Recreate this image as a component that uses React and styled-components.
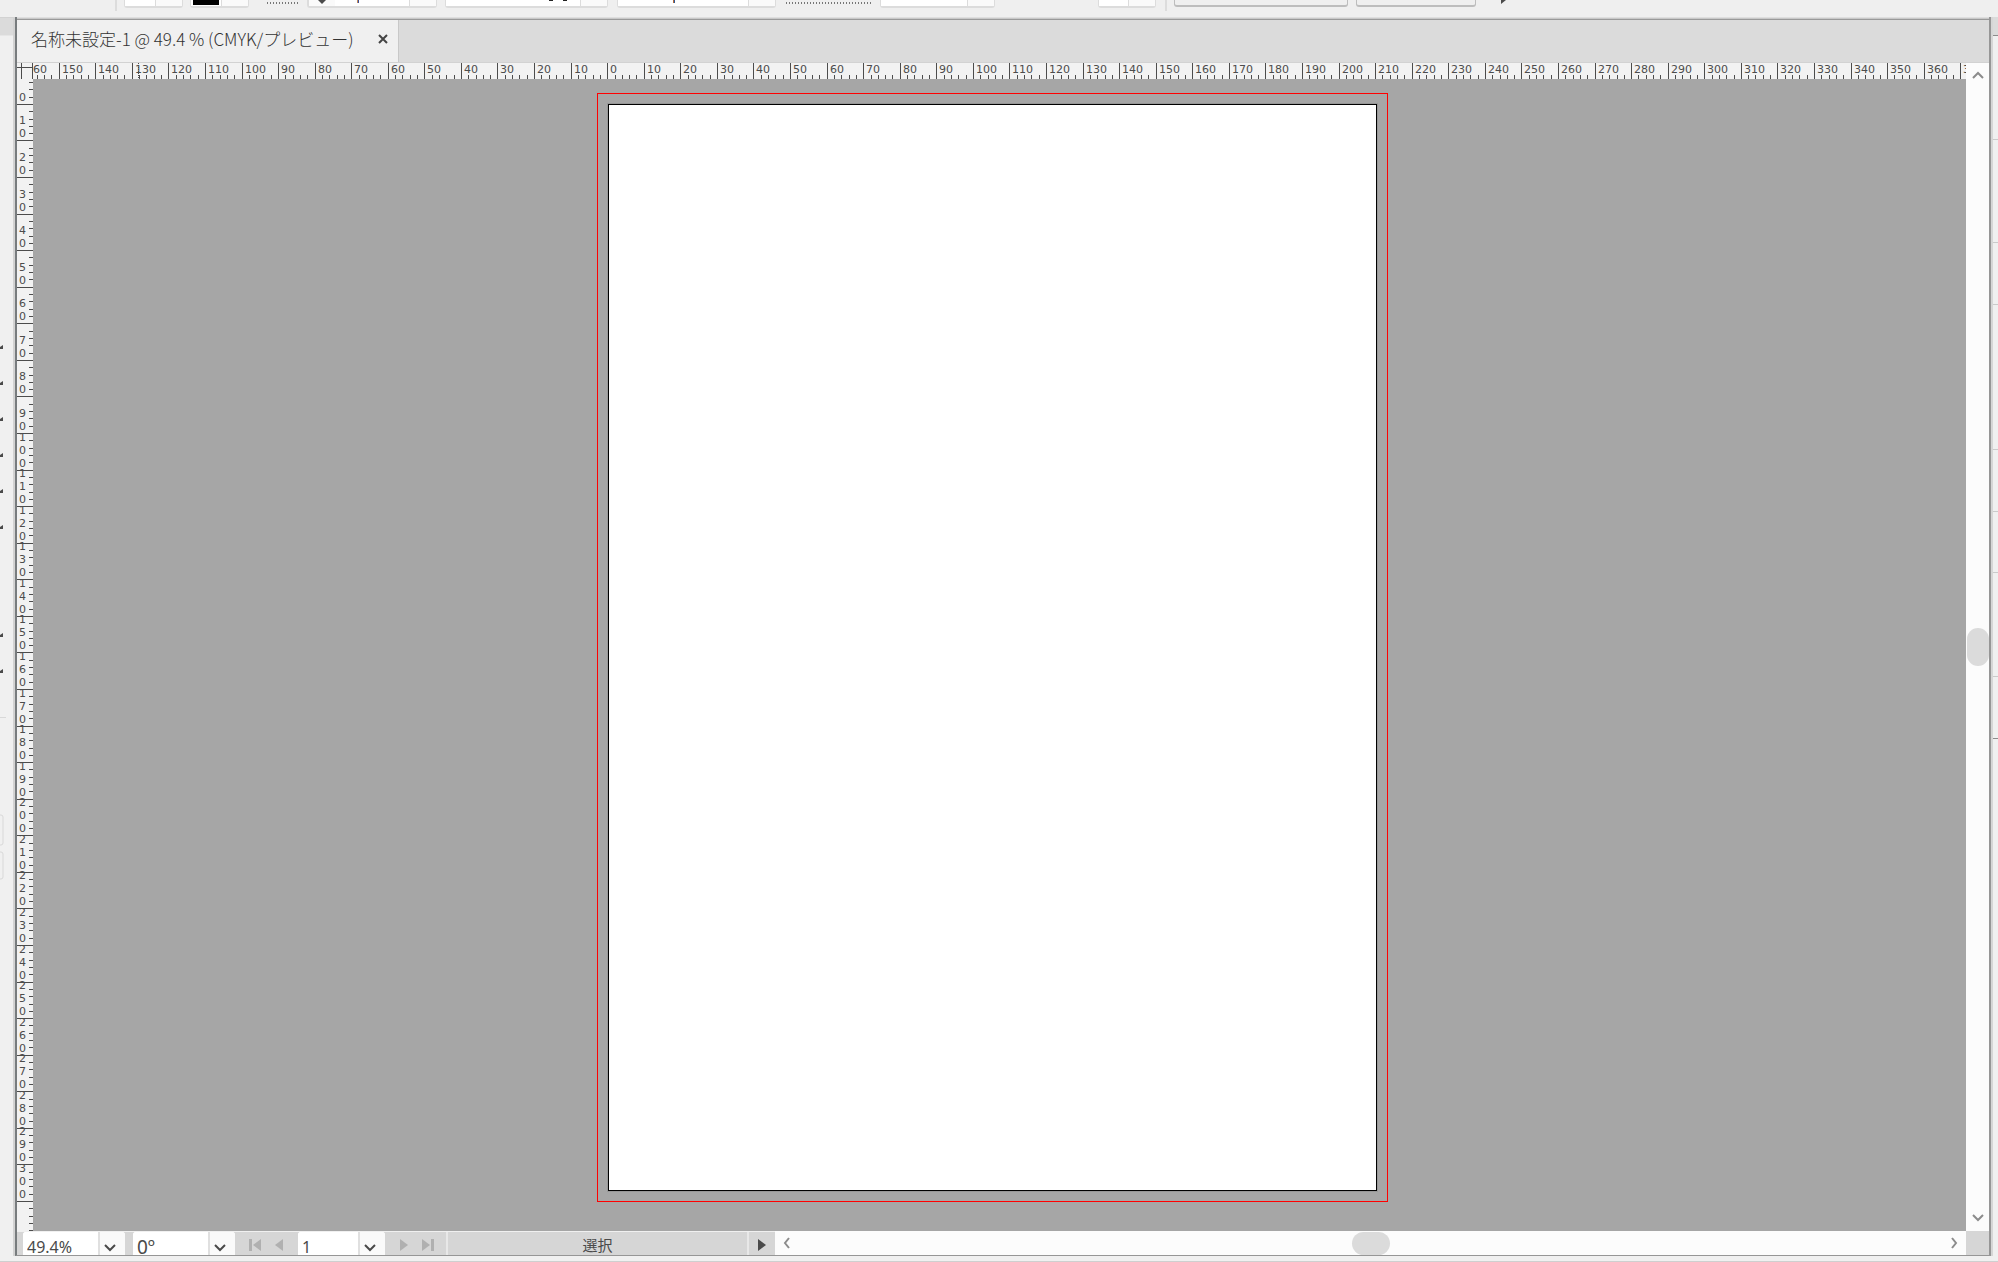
import React, { useState } from 'react'
import styled, { createGlobalStyle } from 'styled-components'

const GlobalStyle = createGlobalStyle`
  * {
    box-sizing: border-box;
  }
  html, body, #root {
    height: 100%;
    margin: 0;
  }
  body {
    background: #f0f0f0;
    color: #4a4a4a;
    font-family: "Noto Sans", "Noto Sans CJK JP", sans-serif;
    overflow: hidden;
  }
  svg {
    display: block;
  }
  button, input {
    font: inherit;
    color: inherit;
    border: 0;
    padding: 0;
    margin: 0;
    border-radius: 0;
  }
`

const Page = styled.div`
  display: flex;
  flex-direction: column;
  height: 100%;
`

const ControlBar = styled.header`
  display: flex;
  align-items: flex-start;
  height: 17px;
  padding-left: 115px;
  background: #efefef;
  overflow: hidden;
`

const BarDivider = styled.div`
  width: 2px;
  height: 11px;
  background: #dcdcdc;
  margin-right: ${props => props.$gap || 0}px;
`

const BarField = styled.div`
  display: flex;
  height: 8px;
  width: ${props => props.$width}px;
  margin-right: ${props => props.$gap}px;
  border: 1px solid #dcdcdc;
  border-width: 0 1px 2px 1px;
  border-radius: 0 0 3px 3px;
  background: #fff;
`

const BarValue = styled.div`
  flex: 1;
  display: flex;
  justify-content: ${props => props.$align || 'flex-end'};
  background: #fff;
`

const BarDrop = styled.div`
  width: 27px;
  border-left: 1px solid #dcdcdc;
  background: #fafafa;
`

const Swatch = styled.div`
  width: 26px;
  height: 5px;
  background: #000;
  margin-right: 2px;
`

const BarDots = styled.div`
  width: ${props => props.$width}px;
  height: 4px;
  margin-right: ${props => props.$gap}px;
  background: repeating-linear-gradient(to right, #777 0 1px, transparent 1px 3px) bottom / 100% 2px no-repeat;
`

const BarButton = styled.div`
  width: ${props => props.$width}px;
  height: 7px;
  margin-right: ${props => props.$gap}px;
  border: 2px solid #bdbdbd;
  border-width: 0 1px 2px 1px;
  border-radius: 0 0 3px 3px;
`

const Body = styled.div`
  flex: 1;
  min-height: 0;
  display: flex;
`

const LeftPanel = styled.aside`
  width: 15px;
  background: #f0f0f0;
  border-right: 2px solid #d3d3d3;
  overflow: hidden;
`

const LeftHead = styled.div`
  height: 19px;
  background: #dbdbdb;
  border-top: 1px solid #d2d2d2;
  border-bottom: 1px solid #e6e6e6;
`

const RightPanel = styled.aside`
  width: 7px;
  border-left: 2px solid #d6d6d6;
  background: #f0f0f0;
  display: flex;
  flex-direction: column;
`

const RightHead = styled.div`
  height: 19px;
  background: #dbdbdb;
  border-bottom: 1px solid #8c8c8c;
`

const RightSection = styled.div`
  height: ${props => props.$height}px;
  border-bottom: 1px solid ${props => props.$dark ? '#8c8c8c' : '#cacaca'};
`

const Workspace = styled.main`
  flex: 1;
  min-width: 0;
  display: flex;
  flex-direction: column;
  border-left: 2px solid #787c7e;
  border-right: 2px solid #969696;
  border-bottom: 1px solid #969696;
`

const TabBar = styled.nav`
  display: flex;
  height: 46px;
  background: #dbdbdb;
  border-top: 3px solid #999;
  border-bottom: 1px solid #d2d2d2;
  border-image: linear-gradient(#dedede 0 2%, #c8c8c8 2% 4%, #999 4% 50%, #d2d2d2 50%) 3 0 1 0;
`

const Tab = styled.div`
  display: flex;
  align-items: center;
  width: 382px;
  height: 42px;
  padding: 0 7px 4px 14px;
  background: #f0f0f0;
  border-right: 1px solid #c8c8c8;
`

const TabTitle = styled.span`
  flex: 1;
  color: #333;
  font-family: "Noto Sans CJK JP", sans-serif;
  font-size: 17px;
  line-height: 24px;
  font-weight: 300;
  white-space: nowrap;
`

const TabClose = styled.button`
  display: flex;
  align-items: center;
  justify-content: center;
  width: 16px;
  height: 16px;
  background: transparent;
`

const Editor = styled.section`
  flex: 1;
  min-height: 0;
  display: grid;
  grid-template-columns: 16px minmax(0, 1fr) 23px;
  grid-template-rows: 16px minmax(0, 1fr);
`

const RulerSvg = styled.svg`
  width: 100%;
  height: 100%;
  overflow: hidden;
  background: #f2f2f2;
  font-family: "DejaVu Sans", sans-serif;
  font-size: 11px;
  fill: #4c4c4c;
  shape-rendering: crispEdges;
`

const Canvas = styled.div`
  position: relative;
  background: #a6a6a6;
  overflow: hidden;
`

const Bleed = styled.div`
  position: absolute;
  left: 564px;
  top: 14px;
  width: 791px;
  height: 1109px;
  border: 1px solid #f00;
`

const Artboard = styled.div`
  position: absolute;
  left: 575px;
  top: 25px;
  width: 769px;
  height: 1087px;
  background: #fff;
  border: 1px solid #000;
  box-shadow: 0 0 0 1px #979797;
`

const ScrollColumn = styled.div`
  grid-row: 1 / 3;
  grid-column: 3;
  display: flex;
  flex-direction: column;
  align-items: center;
  padding: 1px 0 2px;
  background: #fcfcfc;
`

const ScrollButton = styled.button`
  display: flex;
  align-items: center;
  justify-content: center;
  width: 24px;
  height: 24px;
  background: transparent;
`

const ScrollTrack = styled.div`
  flex: 1;
  align-self: stretch;
  display: flex;
  flex-direction: ${props => props.$vertical ? 'column' : 'row'};
  align-items: center;
`

const Spacer = styled.div`
  flex: ${props => props.$grow} 0 0;
`

const Thumb = styled.div`
  width: ${props => props.$vertical ? 22 : 38}px;
  height: ${props => props.$vertical ? 38 : 23}px;
  border-radius: 12px;
  background: #dbdbdb;
`

const StatusBar = styled.footer`
  display: flex;
  height: 24px;
  background: #d6d6d6;
`

const StatusTools = styled.div`
  display: flex;
  align-items: stretch;
  width: 758px;
  padding-left: 6px;
  border-top: 1px solid #f0f0f0;
  overflow: hidden;
`

const Combo = styled.div`
  display: flex;
  width: ${props => props.$width}px;
  margin-right: ${props => props.$gap}px;
  border-radius: 3px 3px 0 0;
  overflow: hidden;
  background: #fff;
`

const ComboInput = styled.input`
  flex: 1;
  min-width: 0;
  padding: 6px 0 0 4px;
  background: #fff;
  font-size: ${props => props.$size}px;
  line-height: 16px;
  outline: 0;
`

const ComboButton = styled.button`
  display: flex;
  align-items: center;
  justify-content: center;
  width: 27px;
  padding: 6px 5px 0 0;
  background: #fafafa;
  border-left: 2px solid #e0e0e0;
`

const NavButton = styled.button`
  display: flex;
  align-items: center;
  justify-content: center;
  width: ${props => props.$width}px;
  margin-right: ${props => props.$gap}px;
  padding-top: 2px;
  background: transparent;
`

const StatusLabel = styled.div`
  flex: 1;
  border: 2px solid #e8e8e8;
  border-width: 0 2px;
  padding-top: 2px;
  text-align: center;
  font-family: "Noto Sans CJK JP", sans-serif;
  font-size: 15px;
  line-height: 22px;
`

const ScrollRow = styled.div`
  flex: 1;
  display: flex;
  align-items: center;
  background: #fcfcfc;
`

const Corner = styled.div`
  width: 23px;
  background: #d6d6d6;
`

const BottomEdge = styled.div`
  height: 6px;
  background: #f0f0f0;
  border-bottom: 1px solid #cfcfcf;
`

// ruler scale: pixels per millimetre at 49.4 %
const PX_PER_MM = 3.657

const range = (from, to, step) => {
  const list = []
  for (let value = from; value <= to; value += step) list.push(value)
  return list
}

function HorizontalRuler() {
  const at = mm => Math.floor(574.7 + mm * PX_PER_MM)
  return (
    <RulerSvg role="img" aria-label="水平定規">
      {range(-160, 378, 2).map(mm => (
        <rect key={mm} x={at(mm)} y={mm % 10 === 0 ? 0 : 12} width="1" height={mm % 10 === 0 ? 16 : 4} />
      ))}
      {range(-150, 370, 10).map(mm => (
        <text key={mm} x={at(mm) + 3} y="10">{Math.abs(mm)}</text>
      ))}
      <text x="0" y="10">60</text>
      <line x1="105.5" y1="0" x2="105.5" y2="16" stroke="#4c4c4c" strokeDasharray="1 1" />
    </RulerSvg>
  )
}

function VerticalRuler() {
  const at = mm => Math.floor(25.4 + mm * PX_PER_MM)
  return (
    <RulerSvg role="img" aria-label="垂直定規">
      {range(-6, 308, 2).map(mm => (
        <rect key={mm} x={mm % 10 === 0 ? 0 : 12} y={at(mm)} width={mm % 10 === 0 ? 16 : 4} height="1" />
      ))}
      {range(0, 300, 10).map(mm => {
        const digits = String(mm).split('')
        return digits.map((digit, i) => (
          <text key={mm + '-' + i} x="2" y={at(mm) - 3 - (digits.length - 1 - i) * 13}>{digit}</text>
        ))
      })}
    </RulerSvg>
  )
}

function RulerCorner() {
  return (
    <RulerSvg aria-hidden="true">
      <rect x="0" y="4" width="16" height="1" />
      <rect x="4" y="0" width="1" height="16" />
      <rect x="15" y="0" width="1" height="16" />
    </RulerSvg>
  )
}

const chevrons = {
  up: 'M1 8L6 3L11 8',
  down: 'M1 4L6 9L11 4',
  left: 'M8 1L4 6L8 11',
  right: 'M4 1L8 6L4 11'
}

function Chevron({ direction, color = '#8c8c8c' }) {
  return (
    <svg width="12" height="12" viewBox="0 0 12 12" fill="none" stroke={color} strokeWidth="2">
      <path d={chevrons[direction]} />
    </svg>
  )
}

function PageArrow({ back, bar, color = '#b0b0b0' }) {
  return (
    <svg width="14" height="14" viewBox="0 0 14 14" fill={color}>
      <g transform={back ? 'translate(14 0) scale(-1 1)' : undefined}>
        <path d={bar ? 'M1 1L9 7L1 13Z' : 'M3 1L11 7L3 13Z'} />
        {bar && <rect x="10" y="1" width="3" height="12" />}
      </g>
    </svg>
  )
}

function ControlFields() {
  return (
    <ControlBar>
      <BarDivider $gap={7} />
      <BarField $width={59} $gap={7}><BarValue /><BarDrop /></BarField>
      <BarField $width={59} $gap={18}><BarValue><Swatch /></BarValue><BarDrop /></BarField>
      <BarDots $width={32} $gap={8} />
      <BarField $width={130} $gap={8}>
        <BarDrop>
          <svg width="26" height="4" fill="#4a4a4a"><path d="M9 0H17L13 4Z" /></svg>
        </BarDrop>
        <BarValue $align="center">
          <svg width="30" height="4"><rect x="0" width="1" height="3" fill="#c48a5a" /><rect x="1" width="1" height="3" fill="#3b4f9a" /></svg>
        </BarValue>
        <BarDrop />
      </BarField>
      <BarField $width={163} $gap={9}>
        <BarValue>
          <svg width="33" height="4" fill="#222"><rect x="2" width="4" height="1" /><rect x="16" width="4" height="1" /></svg>
        </BarValue>
        <BarDrop />
      </BarField>
      <BarField $width={159} $gap={10}>
        <BarValue $align="center">
          <svg width="20" height="4"><rect x="0" width="1" height="3" fill="#b5673a" /><rect x="1" width="1" height="3" fill="#2c5b96" /></svg>
        </BarValue>
        <BarDrop />
      </BarField>
      <BarDots $width={85} $gap={9} />
      <BarField $width={115} $gap={103}><BarValue /><BarDrop /></BarField>
      <BarField $width={58} $gap={9}><BarValue /><BarDrop /></BarField>
      <BarDivider $gap={7} />
      <BarButton $width={174} $gap={8} />
      <BarButton $width={120} $gap={25} />
      <svg width="6" height="5" fill="#4a4a4a"><path d="M0 0H5L0 4Z" /></svg>
    </ControlBar>
  )
}

function ToolMarks() {
  return (
    <svg width="13" height="900" aria-hidden="true">
      {[312, 348, 384, 420, 456, 492, 600, 636].map(y => (
        <path key={y} d={`M0 ${y - 1}L3 ${y - 3}V${y + 1}H0Z`} fill="#4a4a4a" />
      ))}
      <rect y="681" width="6" height="1" fill="#d8d8d8" />
      <rect x="-6" y="779" width="9" height="30" rx="2" fill="none" stroke="#d8d8d8" />
      <rect x="-6" y="816" width="9" height="27" rx="2" fill="none" stroke="#d8d8d8" />
    </svg>
  )
}

function ComboField({ label, initial, width, gap, size = 16 }) {
  const [value, setValue] = useState(initial)
  return (
    <Combo $width={width} $gap={gap}>
      <ComboInput type="text" aria-label={label} $size={size} value={value} onChange={event => setValue(event.target.value)} />
      <ComboButton aria-label={label + 'を選択'}><Chevron direction="down" color="#4a4a4a" /></ComboButton>
    </Combo>
  )
}

function App() {
  return (
    <Page>
      <GlobalStyle />
      <ControlFields />
      <Body>
        <LeftPanel>
          <LeftHead />
          <ToolMarks />
        </LeftPanel>
        <Workspace>
          <TabBar>
            <Tab>
              <TabTitle>名称未設定-1 @ 49.4 % (CMYK/プレビュー)</TabTitle>
              <TabClose aria-label="閉じる">
                <svg width="10" height="10" viewBox="0 0 10 10" stroke="#444" strokeWidth="2">
                  <path d="M1 1L9 9M9 1L1 9" />
                </svg>
              </TabClose>
            </Tab>
          </TabBar>
          <Editor>
            <RulerCorner />
            <HorizontalRuler />
            <ScrollColumn>
              <ScrollButton aria-label="上へ"><Chevron direction="up" /></ScrollButton>
              <ScrollTrack $vertical>
                <Spacer $grow={1} />
                <Thumb $vertical />
                <Spacer $grow={1} />
              </ScrollTrack>
              <ScrollButton aria-label="下へ"><Chevron direction="down" /></ScrollButton>
            </ScrollColumn>
            <VerticalRuler />
            <Canvas>
              <Bleed />
              <Artboard />
            </Canvas>
          </Editor>
          <StatusBar>
            <StatusTools>
              <ComboField label="ズーム" initial="49.4%" width={102} gap={8} />
              <ComboField label="回転" initial="0º" width={102} gap={10} size={19} />
              <NavButton aria-label="最初" $width={20} $gap={4}><PageArrow back bar /></NavButton>
              <NavButton aria-label="前へ" $width={20} $gap={9}><PageArrow back /></NavButton>
              <ComboField label="アートボード" initial="1" width={87} gap={9} />
              <NavButton aria-label="次へ" $width={20} $gap={4}><PageArrow /></NavButton>
              <NavButton aria-label="最後" $width={20} $gap={8}><PageArrow bar /></NavButton>
              <StatusLabel>選択</StatusLabel>
              <NavButton aria-label="表示メニュー" $width={26} $gap={0}><PageArrow color="#4a4a4a" /></NavButton>
            </StatusTools>
            <ScrollRow>
              <ScrollButton aria-label="左へ"><Chevron direction="left" /></ScrollButton>
              <ScrollTrack>
                <Spacer $grow={1} />
                <Thumb />
                <Spacer $grow={1} />
              </ScrollTrack>
              <ScrollButton aria-label="右へ"><Chevron direction="right" /></ScrollButton>
            </ScrollRow>
            <Corner />
          </StatusBar>
        </Workspace>
        <RightPanel>
          <RightHead />
          {[104, 103, 62, 145, 62, 61, 104].map((height, i) => (
            <RightSection key={i} $height={height} />
          ))}
          <RightSection $height={62} $dark />
        </RightPanel>
      </Body>
      <BottomEdge />
    </Page>
  )
}

export default App
